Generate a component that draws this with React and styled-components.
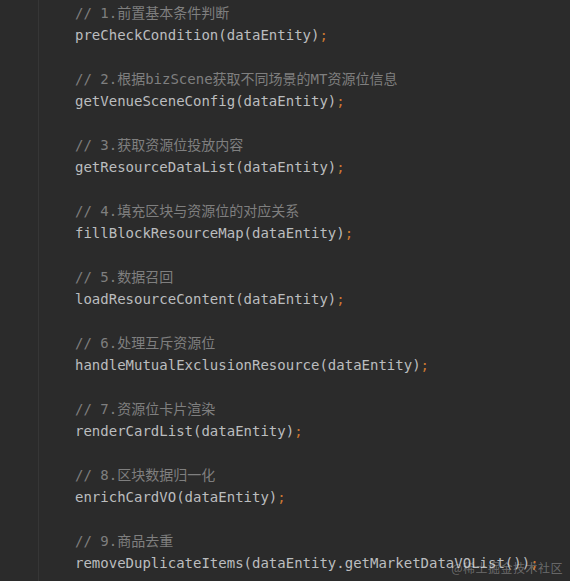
import React from 'react'
import styled, { createGlobalStyle } from 'styled-components'

const GlobalStyle = createGlobalStyle`
    html, body {
        margin: 0;
        padding: 0;
        background: #2b2b2b;
    }
`

const Editor = styled.div`
    position: relative;
    width: 570px;
    height: 581px;
    overflow: hidden;
    background: #2b2b2b;
    display: flex;
    flex-direction: row;
`
const Gutter = styled.div`
    width: 38px;
    flex: none;
    border-right: 1px solid #363636;
`
const Code = styled.div`
    padding: 2px 0 0 36px;
    font-family: 'DejaVu Sans Mono', 'Noto Sans CJK SC', monospace;
    font-size: 14px;
    line-height: 22px;
    white-space: pre;
`
const Line = styled.div`
    height: 22px;
    color: ${(props) => (props.comment ? '#7f7f7f' : '#bbbdbf')};
`
const Semi = styled.span`
    color: #cc7832;
`
const Watermark = styled.div`
    position: absolute;
    right: 7px;
    bottom: 5px;
    font-family: 'Noto Sans CJK SC', sans-serif;
    font-size: 12px;
    letter-spacing: 0.5px;
    color: rgba(255, 255, 255, 0.3);
`

const steps = [
    ['1.前置基本条件判断', 'preCheckCondition(dataEntity)'],
    ['2.根据bizScene获取不同场景的MT资源位信息', 'getVenueSceneConfig(dataEntity)'],
    ['3.获取资源位投放内容', 'getResourceDataList(dataEntity)'],
    ['4.填充区块与资源位的对应关系', 'fillBlockResourceMap(dataEntity)'],
    ['5.数据召回', 'loadResourceContent(dataEntity)'],
    ['6.处理互斥资源位', 'handleMutualExclusionResource(dataEntity)'],
    ['7.资源位卡片渲染', 'renderCardList(dataEntity)'],
    ['8.区块数据归一化', 'enrichCardVO(dataEntity)'],
    ['9.商品去重', 'removeDuplicateItems(dataEntity.getMarketDataVOList())'],
]

export default function App() {
    return (
        <>
            <GlobalStyle />
            <Editor>
                <Gutter />
                <Code>
                    {steps.map(([comment, call], i) => (
                        <React.Fragment key={i}>
                            <Line comment>{'// ' + comment}</Line>
                            <Line>
                                {call}
                                <Semi>;</Semi>
                            </Line>
                            {i < steps.length - 1 && <Line />}
                        </React.Fragment>
                    ))}
                </Code>
                <Watermark>@稀土掘金技术社区</Watermark>
            </Editor>
        </>
    )
}
